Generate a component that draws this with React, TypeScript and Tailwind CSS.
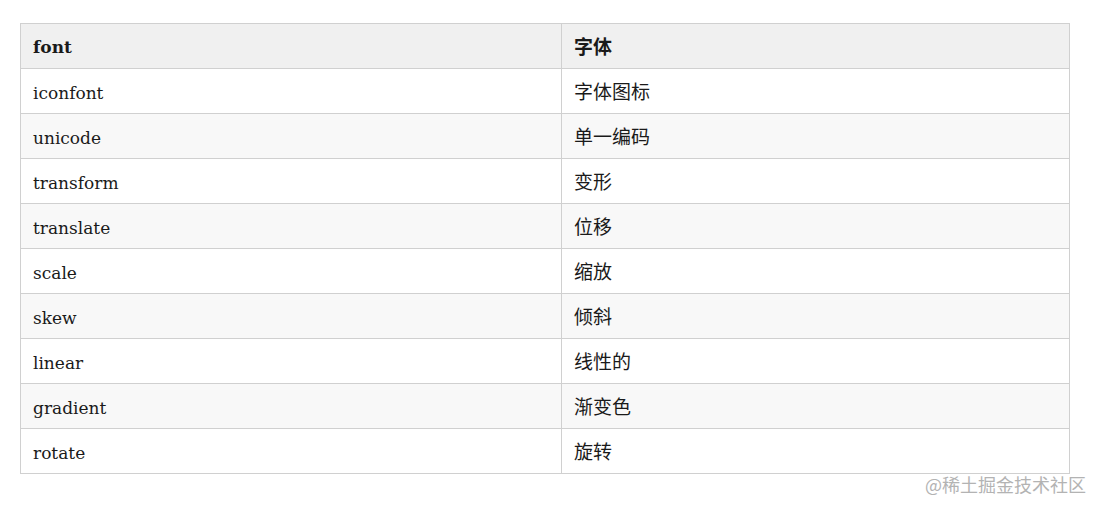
const rows: [string, string][] = [
  ["iconfont", "字体图标"],
  ["unicode", "单一编码"],
  ["transform", "变形"],
  ["translate", "位移"],
  ["scale", "缩放"],
  ["skew", "倾斜"],
  ["linear", "线性的"],
  ["gradient", "渐变色"],
  ["rotate", "旋转"],
];

const cell = "border border-[#d0d0d0] px-[12px] align-middle leading-[24px]";
const cjk = "font-['Noto_Sans_CJK_SC',sans-serif] text-[19px]";

export default function App() {
  return (
    <div className="flex h-[510px] w-[1103px] flex-col bg-white pl-5 pt-[23px]">
      <table className="w-[1050px] border-collapse text-[17px] text-[#1a1a1a] font-['DejaVu_Serif',serif]">
        <thead>
          <tr className="h-[45px] bg-[#f0f0f0]">
            <th className={`w-[541px] pt-[2px] text-left font-bold ${cell}`}>font</th>
            <th className={`text-left font-bold ${cell} ${cjk}`}>字体</th>
          </tr>
        </thead>
        <tbody>
          {rows.map(([en, zh], i) => (
            <tr key={en} className={`h-[45px] ${i % 2 === 1 ? "bg-[#f8f8f8]" : "bg-white"}`}>
              <td className={`pt-[4px] ${cell}`}>{en}</td>
              <td className={`${cell} ${cjk}`}>{zh}</td>
            </tr>
          ))}
        </tbody>
      </table>
      <div className="-mt-[3px] flex justify-end pr-[17px] font-['Noto_Sans_CJK_SC',sans-serif] text-[18px] text-[#b3b3b3]">
        @稀土掘金技术社区
      </div>
    </div>
  );
}
